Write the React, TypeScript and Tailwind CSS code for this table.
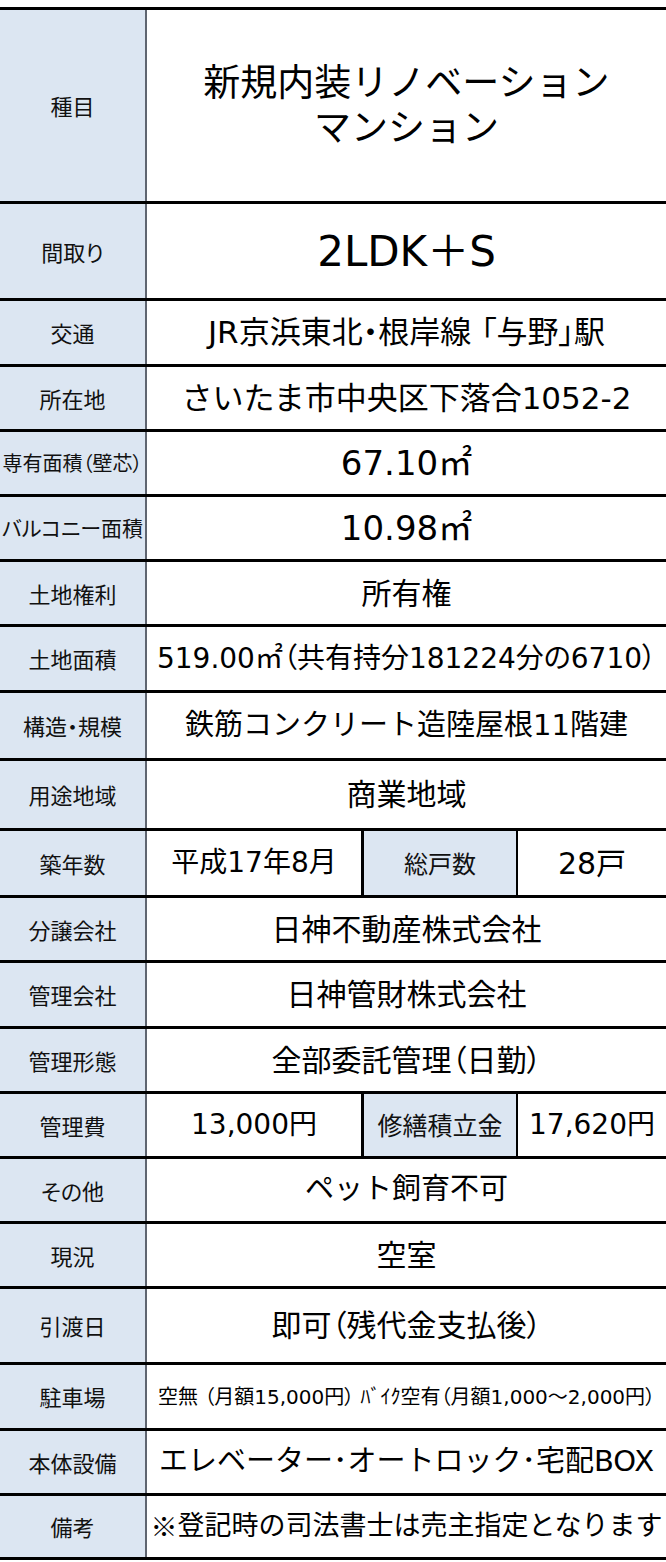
import React from "react";

type Row = {
  label: React.ReactNode;
  value?: React.ReactNode;
  h: string;
  vcls?: string;
  lcls?: string;
  split?: { v1: string; l2: string; v2: string; l2cls: string; v2cls: string };
};

const rows: Row[] = [
  {
    label: "種目",
    h: "h-[194px]",
    value: (
      <span className="block text-center leading-[45px]">
        新規内装リノベーション
        <br />
        マンション
      </span>
    ),
    vcls: "text-[37px]",
  },
  { label: "間取り", h: "h-[97px]", value: "2LDK＋S", vcls: "text-[42px]" },
  {
    label: "交通",
    h: "h-[66px]",
    value: "JR京浜東北・根岸線 「与野」駅",
    vcls: "text-[31px] [font-feature-settings:'palt']",
  },
  { label: "所在地", h: "h-[65px]", value: "さいたま市中央区下落合1052-2", vcls: "text-[31px]" },
  {
    label: "専有面積（壁芯）",
    lcls: "text-[20px]",
    h: "h-[65px]",
    value: "67.10㎡",
    vcls: "text-[34px]",
  },
  { label: "バルコニー面積", lcls: "text-[21px]", h: "h-[65px]", value: "10.98㎡", vcls: "text-[34px]" },
  { label: "土地権利", h: "h-[65px]", value: "所有権", vcls: "text-[30px]" },
  {
    label: "土地面積",
    h: "h-[66px]",
    value: "519.00㎡（共有持分181224分の6710）",
    vcls: "text-[28px] [font-feature-settings:'palt']",
  },
  { label: "構造・規模", h: "h-[68px]", value: "鉄筋コンクリート造陸屋根11階建", vcls: "text-[29px]" },
  { label: "用途地域", h: "h-[70px]", value: "商業地域", vcls: "text-[30px]" },
  {
    label: "築年数",
    h: "h-[67px]",
    split: { v1: "平成17年8月", l2: "総戸数", v2: "28戸", l2cls: "text-[24px]", v2cls: "text-[30px]" },
  },
  { label: "分譲会社", h: "h-[65px]", value: "日神不動産株式会社", vcls: "text-[30px]" },
  { label: "管理会社", h: "h-[66px]", value: "日神管財株式会社", vcls: "text-[30px]" },
  {
    label: "管理形態",
    h: "h-[65px]",
    value: "全部委託管理（日勤）",
    vcls: "text-[30px] [font-feature-settings:'palt']",
  },
  {
    label: "管理費",
    h: "h-[65px]",
    split: { v1: "13,000円", l2: "修繕積立金", v2: "17,620円", l2cls: "text-[25px]", v2cls: "text-[28px]" },
  },
  { label: "その他", h: "h-[65px]", value: "ペット飼育不可", vcls: "text-[29px]" },
  { label: "現況", h: "h-[65px]", value: "空室", vcls: "text-[30px]" },
  {
    label: "引渡日",
    h: "h-[76px]",
    value: "即可（残代金支払後）",
    vcls: "text-[30px] [font-feature-settings:'palt']",
  },
  {
    label: "駐車場",
    h: "h-[66px]",
    value: "空無 （月額15,000円） ﾊﾞｲｸ空有（月額1,000～2,000円）",
    vcls: "text-[20px] [font-feature-settings:'palt']",
  },
  {
    label: "本体設備",
    h: "h-[65px]",
    value: "エレベーター･オートロック･宅配BOX",
    vcls: "text-[29px]",
  },
  {
    label: "備考",
    h: "h-[64px]",
    value: (
      <>
        <span className="[font-family:'Noto_Sans_CJK_JP',sans-serif]">※</span>
        登記時の司法書士は売主指定となります
      </>
    ),
    vcls: "text-[27px]",
  },
];

const valueFont = "[font-family:'DejaVu_Sans','Noto_Sans_CJK_JP',sans-serif]";

export default function App() {
  return (
    <div className="w-[666px] bg-white pt-[7px] text-black [font-family:'Noto_Sans_CJK_JP','Noto_Sans',sans-serif]">
      <div className="border-b-[3px] border-black">
        {rows.map((r, i) => (
          <div key={i} className={`flex ${r.h} border-t-[3px] border-black`}>
            <div
              className={`flex w-[145px] shrink-0 items-center justify-center whitespace-nowrap bg-[#dce6f2] text-[#111] [font-feature-settings:'palt'] ${
                r.lcls ?? "text-[22px]"
              }`}
            >
              {r.label}
            </div>
            <div className="w-[2px] shrink-0 bg-[#5f6570]" />
            {r.split ? (
              <div className="flex flex-1">
                <div
                  className={`flex w-[214px] items-center justify-center whitespace-nowrap text-[28px] ${valueFont}`}
                >
                  {r.split.v1}
                </div>
                <div className="w-[3px] shrink-0 bg-black" />
                <div
                  className={`flex w-[152px] items-center justify-center whitespace-nowrap bg-[#dce6f2] text-[#111] [font-feature-settings:'palt'] ${r.split.l2cls}`}
                >
                  {r.split.l2}
                </div>
                <div className="w-[2px] shrink-0 bg-black" />
                <div
                  className={`flex flex-1 items-center justify-center whitespace-nowrap ${valueFont} ${r.split.v2cls}`}
                >
                  {r.split.v2}
                </div>
              </div>
            ) : (
              <div
                className={`flex flex-1 items-center justify-center whitespace-nowrap ${valueFont} ${r.vcls ?? ""}`}
              >
                {r.value}
              </div>
            )}
          </div>
        ))}
      </div>
    </div>
  );
}
